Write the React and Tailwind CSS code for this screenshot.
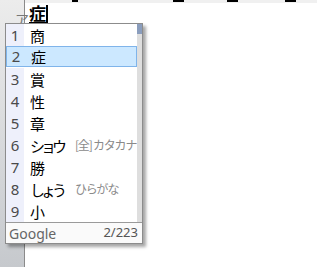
const rows = [
  { n: 1, text: "商" },
  { n: 2, text: "症", active: true },
  { n: 3, text: "賞" },
  { n: 4, text: "性" },
  { n: 5, text: "章" },
  { n: 6, text: "ショウ", note: "[全] カタカナ", kana: true },
  { n: 7, text: "勝" },
  { n: 8, text: "しょう", note: "ひらがな", kana: true },
  { n: 9, text: "小" },
];

const jp = "font-['Noto_Sans_CJK_JP',sans-serif]";
const latin = "font-['Noto_Sans','Noto_Sans_CJK_JP',sans-serif]";

function CandidateRow({ n, text, note, active, kana }) {
  return (
    <div className="flex h-[22px]">
      <div
        className={
          active
            ? "flex h-[21px] w-full items-center border border-[#7fb4ea] bg-[#cce8ff]"
            : "flex h-[22px] w-full items-center"
        }
      >
        <span
          className={
            (active ? "bg-transparent " : "bg-[#eef0fb] ") +
            "flex h-full w-[18px] shrink-0 items-center justify-center text-[15px] text-[#4a4a4a] " +
            latin
          }
        >
          {n}
        </span>
        <span
          className={
            (kana ? "tracking-[-4px] " : "") +
            "ml-[6px] w-[45px] shrink-0 whitespace-nowrap text-[15px] leading-none text-black " +
            jp
          }
        >
          {text}
        </span>
        {note && (
          <span className={"whitespace-nowrap text-[12px] leading-none tracking-[-1.2px] text-[#8a8a8a] " + jp}>
            {note}
          </span>
        )}
      </div>
    </div>
  );
}

export default function App() {
  return (
    <div className="relative flex h-[267px] w-[317px] overflow-hidden bg-white">
      <div className="w-[25px] shrink-0 border-r border-[#8a8a8a] bg-gradient-to-b from-[#ececec] to-[#c6c9cd]">
        <div className={"ml-[15px] mt-[12px] text-[14px] leading-none text-[#777] " + jp}>ア</div>
      </div>

      <div className="flex flex-1 flex-col">
        <div className="relative h-[3px] bg-[#f0f0f0]">
          <span className="absolute left-[47px] top-0 h-[2px] w-[6px] bg-black" />
          <span className="absolute left-[148px] top-0 h-[2px] w-[11px] bg-black" />
          <span className="absolute left-[202px] top-0 h-[2px] w-[11px] bg-black" />
          <span className="absolute left-[260px] top-0 h-[2px] w-[11px] bg-black" />
        </div>
        <div className="ml-[4px] flex items-end">
          <span className={"border-b border-black pt-[1px] text-[17px] leading-[18px] font-bold text-black " + jp}>
            症
          </span>
          <span className="h-[18px] w-[2px] bg-black" />
        </div>
      </div>

      <div className="absolute left-[5px] top-[23px] flex w-[138px] flex-col border border-[#8c8c8c] bg-white shadow-[3px_3px_3px_rgba(0,0,0,0.35)]">
        <div className="flex">
          <div className="flex w-[131px] flex-col">
            {rows.map((r) => (
              <CandidateRow key={r.n} {...r} />
            ))}
          </div>
          <div className="flex w-[5px] flex-col bg-[#dedede]">
            <div className="h-[10px] bg-[#8a9dbd]" />
          </div>
        </div>
        <div className={"flex h-[21px] items-center justify-between border-t border-[#9a9a9a] bg-[#fafafa] pl-[3px] pr-[4px] text-[14px] text-[#666] " + latin}>
          <span>Google</span>
          <span className="text-[13px] text-[#555]">2/223</span>
        </div>
      </div>
    </div>
  );
}
